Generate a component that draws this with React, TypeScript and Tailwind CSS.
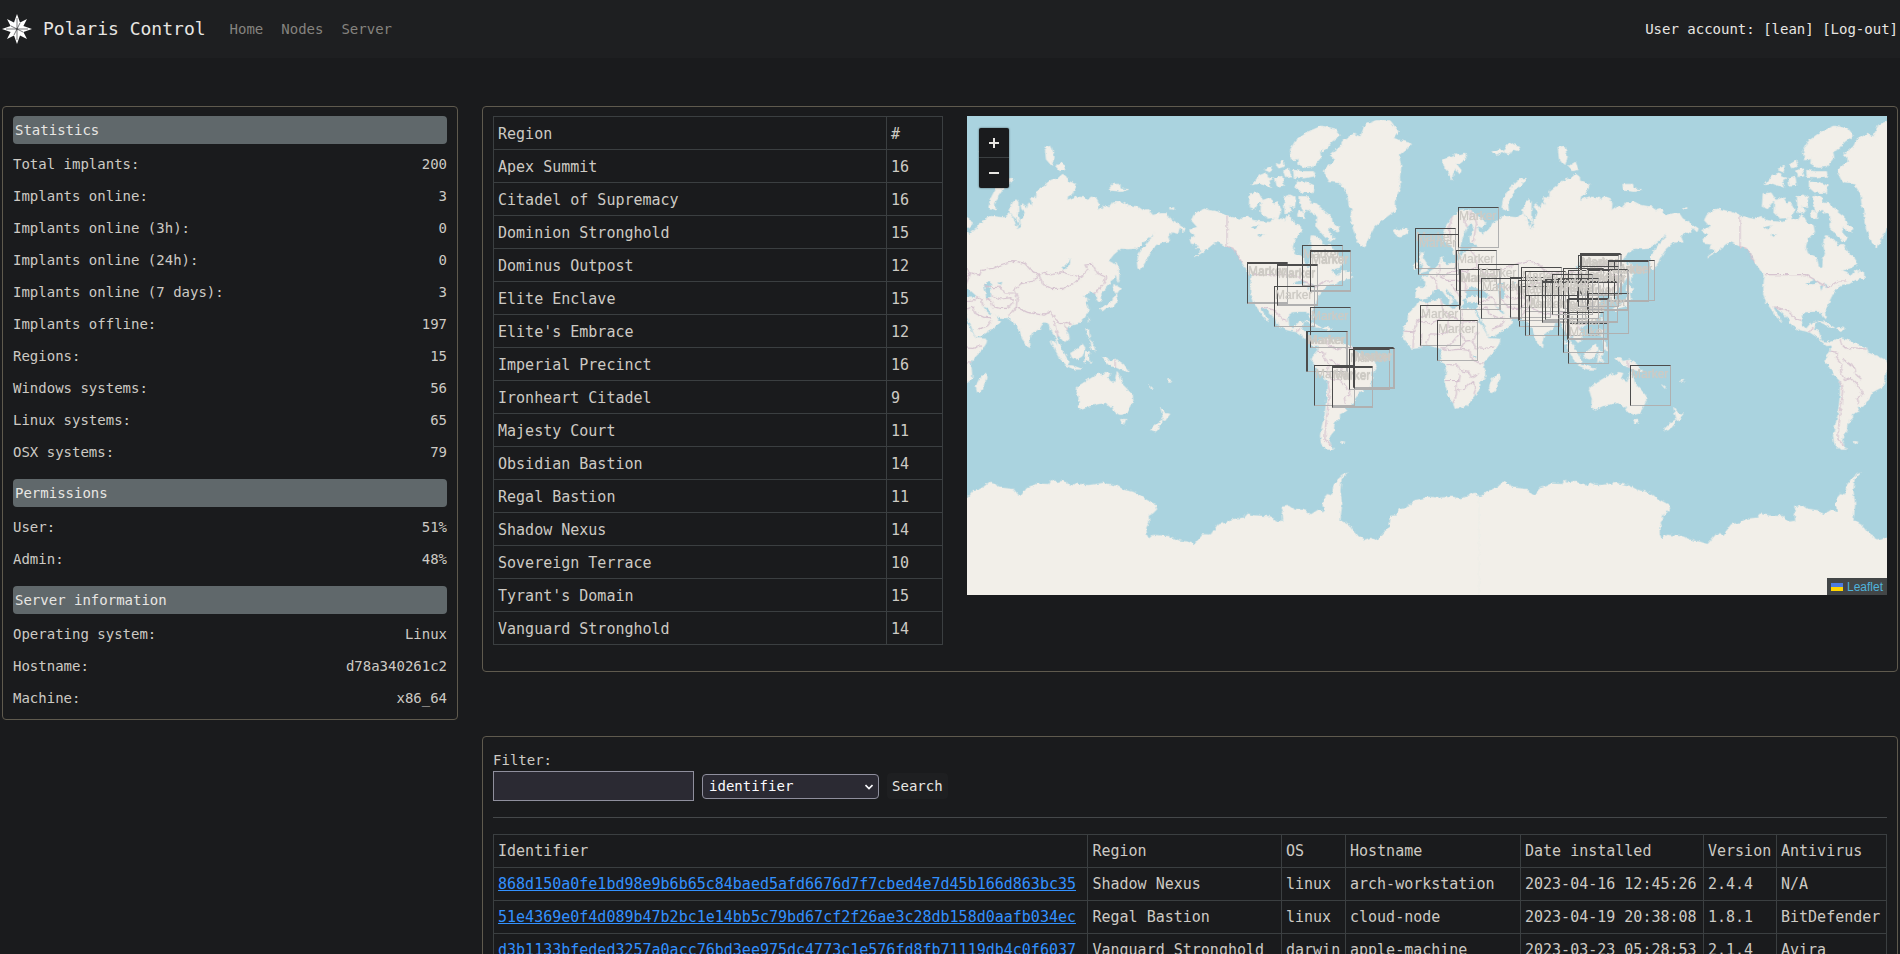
import React from "react";

const stats = [
  {
    title: "Statistics",
    rows: [
      ["Total implants:", "200"],
      ["Implants online:", "3"],
      ["Implants online (3h):", "0"],
      ["Implants online (24h):", "0"],
      ["Implants online (7 days):", "3"],
      ["Implants offline:", "197"],
      ["Regions:", "15"],
      ["Windows systems:", "56"],
      ["Linux systems:", "65"],
      ["OSX systems:", "79"],
    ],
  },
  {
    title: "Permissions",
    rows: [
      ["User:", "51%"],
      ["Admin:", "48%"],
    ],
  },
  {
    title: "Server information",
    rows: [
      ["Operating system:", "Linux"],
      ["Hostname:", "d78a340261c2"],
      ["Machine:", "x86_64"],
    ],
  },
];

const regions = [
  ["Apex Summit", 16],
  ["Citadel of Supremacy", 16],
  ["Dominion Stronghold", 15],
  ["Dominus Outpost", 12],
  ["Elite Enclave", 15],
  ["Elite's Embrace", 12],
  ["Imperial Precinct", 16],
  ["Ironheart Citadel", 9],
  ["Majesty Court", 11],
  ["Obsidian Bastion", 14],
  ["Regal Bastion", 11],
  ["Shadow Nexus", 14],
  ["Sovereign Terrace", 10],
  ["Tyrant's Domain", 15],
  ["Vanguard Stronghold", 14],
];

const nodeColumns = [
  { name: "Identifier", width: "w-[43%]" },
  { name: "Region", width: "w-[14%]" },
  { name: "OS", width: "w-16" },
  { name: "Hostname", width: "w-[175px]" },
  { name: "Date installed", width: "w-[183px]" },
  { name: "Version", width: "w-[73px]" },
  { name: "Antivirus", width: "w-[110px]" },
];

const nodes = [
  ["868d150a0fe1bd98e9b6b65c84baed5afd6676d7f7cbed4e7d45b166d863bc35", "Shadow Nexus", "linux", "arch-workstation", "2023-04-16 12:45:26", "2.4.4", "N/A"],
  ["51e4369e0f4d089b47b2bc1e14bb5c79bd67cf2f26ae3c28db158d0aafb034ec", "Regal Bastion", "linux", "cloud-node", "2023-04-19 20:38:08", "1.8.1", "BitDefender"],
  ["d3b1133bfeded3257a0acc76bd3ee975dc4773c1e576fd8fb71119db4c0f6037", "Vanguard Stronghold", "darwin", "apple-machine", "2023-03-23 05:28:53", "2.1.4", "Avira"],
];

// Marker corners, in map pixels at zoom level 1
const markers = [
  [281, 146], [281, 147], [311, 148], [311, 149], [308, 170], [336, 129], [344, 134], [344, 135],
  [344, 191], [340, 215], [341, 215], [348, 249], [366, 250], [366, 251], [383, 233], [387, 231],
  [388, 232], [449, 112], [452, 118], [492, 91], [490, 134], [493, 153], [494, 153], [512, 148],
  [515, 162], [454, 189], [471, 204], [544, 161], [553, 170], [552, 164], [555, 151], [559, 155],
  [563, 179], [559, 179], [576, 165], [576, 166], [579, 163], [592, 179], [597, 152], [602, 154],
  [602, 207], [597, 196], [612, 139], [614, 137], [615, 138], [622, 154], [611, 166], [611, 165],
  [648, 144], [642, 144], [642, 145], [622, 177], [601, 183], [602, 182], [621, 153], [612, 150],
  [664, 249], [592, 162], [586, 158],
];

const LAND = [
  // Europe and Asia
  "M70 372L78 345L95 320L118 300L140 298L155 303L158 312L185 325L195 340L184 352L168 346L172 360L190 372L195 362L205 358L215 340L235 330L238 322L250 318L268 320L290 322L305 310L316 322L325 345L330 354L333 340L328 328L308 310L306 300L316 276L326 268L332 276L331 320L336 340L326 354L330 357L342 350L338 330L346 320L352 306L342 296L340 286L345 280L352 288L358 296L364 278L376 285L368 262L386 264L388 242L410 225L430 210L450 205L465 192L476 200L478 212L506 222L500 238L492 252L480 258L478 270L505 260L530 262L540 270L550 260L566 265L574 280L572 300L588 288L605 292L615 278L640 275L660 285L690 290L705 300L720 298L735 315L755 310L775 310L785 325L810 340L832 355L828 365L815 352L810 370L790 365L780 380L785 392L765 395L750 402L735 415L720 440L712 455L698 478L690 474L688 455L694 430L708 410L722 392L734 380L738 368L720 386L706 396L700 402L686 414L660 416L640 414L618 432L602 452L614 458L628 470L622 495L610 515L596 530L590 538L580 550L582 568L574 576L566 566L564 550L556 546L544 545L540 552L528 558L542 566L534 576L541 590L541 605L530 622L512 640L498 642L484 648L472 655L482 670L485 685L472 697L462 686L454 676L447 672L448 690L458 704L464 722L472 736L462 728L450 712L446 690L440 672L430 658L424 640L412 635L402 640L398 652L384 662L372 668L368 682L361 705L352 700L342 676L334 652L324 642L312 632L300 622L286 622L270 618L252 608L240 592L226 588L236 602L248 612L256 606L266 618L276 634L262 652L240 664L222 676L206 680L198 664L190 644L180 624L172 606L170 594L174 576L160 574L142 574L136 562L124 566L128 582L120 590L112 576L102 560L88 548L78 534L74 540L84 556L100 568L94 570L92 580L86 582L88 568L76 556L66 542L52 538L40 540L34 552L24 562L6 568L0 562L-14 562L-14 532L12 534L16 514L0 502L20 496L30 482L44 474L56 462L60 444L66 438L64 456L80 462L106 456L120 442L128 428L148 420L152 410L172 412L166 400L150 398L148 380L160 352L150 340L138 352L128 378L120 402L118 422L106 438L98 428L92 404L80 400L70 390Z",
  // Africa
  "M-50 655L-40 635L-34 608L-12 585L-6 572L18 576L60 565L66 580L88 590L98 598L106 588L128 596L160 596L166 612L178 636L192 662L206 684L238 686L236 698L222 720L202 740L188 758L192 778L194 802L176 816L174 840L160 856L150 872L134 888L104 894L98 878L84 854L72 812L78 784L76 764L60 746L64 730L58 713L38 708L18 702L-2 712L-24 714L-42 696L-52 680Z",
  // Americas
  "M870 305L890 296L905 300L930 305L957 316L975 322L1000 327L1020 318L1035 330L1060 334L1085 336L1105 322L1130 330L1142 312L1160 340L1176 345L1180 365L1160 385L1153 410L1160 430L1185 440L1192 466L1204 472L1206 446L1212 430L1206 400L1212 376L1225 378L1240 390L1250 406L1265 402L1280 425L1300 445L1308 458L1290 472L1262 480L1278 486L1288 498L1304 478L1312 490L1328 504L1302 508L1284 520L1264 522L1246 535L1235 550L1225 570L1220 585L1210 600L1213 626L1205 620L1198 603L1175 603L1150 605L1140 620L1142 645L1155 655L1172 635L1186 635L1178 657L1192 662L1200 690L1215 698L1230 692L1240 688L1256 684L1285 690L1300 697L1335 712L1340 727L1375 740L1398 752L1404 768L1392 788L1390 810L1385 828L1352 845L1345 860L1325 888L1308 888L1313 902L1294 910L1294 922L1280 935L1276 950L1278 960L1266 975L1262 990L1268 1004L1276 1016L1256 1016L1240 1000L1236 975L1242 945L1250 915L1254 880L1257 850L1257 812L1235 790L1222 765L1211 753L1213 740L1228 722L1230 704L1216 706L1202 694L1188 680L1165 665L1135 658L1110 645L1102 625L1078 600L1060 588L1058 594L1082 634L1065 618L1050 595L1035 575L1027 550L1028 520L1031 500L1015 475L1000 455L990 430L970 412L950 405L930 395L916 400L902 412L880 428L860 440L884 420L866 415L872 402L850 400L846 386L862 375L842 360L868 350L850 330L858 314Z",
  // Greenland, Iceland
  "M1248 182L1281 150L1266 135L1296 110L1306 90L1336 72L1356 80L1371 45L1401 32L1426 30L1446 32L1470 64L1456 85L1508 100L1490 120L1471 135L1478 170L1474 200L1476 230L1462 265L1461 300L1428 325L1398 350L1380 385L1368 411L1351 400L1336 360L1328 320L1330 300L1322 285L1318 250L1296 218L1264 215L1256 200Z",
  "M1454 360L1468 356L1480 360L1496 354L1497 368L1476 381L1460 374Z",
  // Canadian archipelago
  "M1175 258L1200 260L1206 278L1225 280L1245 300L1270 320L1272 336L1292 350L1288 366L1264 350L1262 366L1278 385L1270 394L1250 380L1225 350L1228 320L1200 298L1188 306L1176 284Z",
  "M1026 250L1050 248L1064 270L1050 280L1040 296L1023 289Z",
  "M1060 272L1086 262L1098 282L1106 274L1120 300L1110 322L1078 324L1058 308Z",
  "M1128 260L1146 254L1162 262L1160 292L1142 288L1152 304L1130 308Z",
  "M1146 120L1162 92L1200 65L1240 48L1280 56L1296 76L1270 95L1255 115L1235 125L1238 142L1215 170L1190 172L1168 160L1170 146L1150 150Z",
  "M1156 180L1180 184L1216 184L1218 198L1190 204L1158 202Z M1164 212L1196 216L1218 226L1216 248L1180 246L1164 232Z",
  "M1032 224L1054 196L1074 188L1080 200L1098 204L1082 212L1090 232L1054 220Z M1102 204L1122 198L1126 226L1106 228Z M1126 182L1142 174L1148 198L1132 200Z M1104 164L1124 152L1130 168L1112 174Z M1068 178L1090 168L1086 186Z M1172 302L1188 306L1186 326L1168 318Z",
  "M1312 480L1326 486L1330 502L1314 504Z M1190 632L1212 636L1240 652L1224 650L1208 640Z M1250 650L1272 654L1262 660L1246 656Z M1298 992L1310 994L1302 1000Z",
  // British isles
  "M-2 430L10 424L6 440L16 455L28 470L20 482L-2 488L8 470L-4 450Z M-18 460L-6 454L-6 474L-20 479Z",
  // Arctic islands
  "M244 292L248 268L265 235L290 212L313 204L316 211L288 234L272 258L262 280L264 300Z",
  "M67 150L84 142L98 140L106 130L118 136L134 132L136 146L118 160L108 162L122 180L118 192L104 174L92 210L84 186L74 176Z",
  "M214 125L236 116L248 124L228 136Z M254 112L268 96L280 104L298 108L294 122L276 118L266 132L250 126Z",
  "M412 112L430 108L440 140L432 166L416 148Z M444 168L464 156L472 178L456 182Z M606 222L636 222L638 236L662 238L640 244L608 240Z M784 296L798 292L798 298Z",
  // East Asian islands
  "M624 455L632 470L634 500L630 516L624 490Z M618 522L638 534L628 548L616 540Z M626 548L630 566L618 586L596 592L584 602L576 596L594 584L612 574Z M534 654L542 658L546 680L540 676Z M546 684L558 706L562 722L550 716Z M541 622L546 626L542 636Z",
  "M430 690L446 702L470 730L484 756L478 764L460 748L444 720Z M472 764L496 766L524 776L500 776Z M488 728L508 716L524 700L532 712L522 738L506 746L494 742Z M534 722L546 724L540 738L550 756L538 748L530 758Z M582 740L598 742L606 752L628 748L648 762L664 784L640 778L628 772L604 764Z",
  "M358 698L368 702L366 712L360 706Z",
  // Oceania and Madagascar
  "M505 835L516 824L535 812L555 800L570 790L582 796L592 785L606 788L600 805L618 816L624 800L628 783L638 800L642 820L660 838L674 855L676 870L665 892L655 908L640 912L622 905L612 884L605 888L595 876L570 880L545 886L524 896L512 890L514 866Z",
  "M638 926L654 926L648 941L642 938Z M758 890L772 908L786 910L770 932L764 914Z M766 926L760 940L742 962L729 957L750 936Z M234 787L236 802L222 842L210 847L206 828L214 808Z M722 822L736 834L730 832Z M778 808L790 806L784 814Z",
].join("");

const LAKES =
  "M138 562L134 546L150 526L162 532L186 538L206 556L190 562L164 556Z M228 522L244 514L252 520L244 530L250 545L250 564L236 564L234 544Z M462 475L484 452L488 446L486 462L470 478Z M270 518L284 514L280 526Z M1152 520L1180 508L1192 518L1176 522Z M1196 520L1206 526L1200 542Z M1210 518L1222 528L1214 534Z M1028 350L1052 346L1040 358Z M1048 375L1070 368L1056 380Z M156 736L168 734L164 744Z";

const BORDERS =
  "M957 316V408L975 414L990 436L1002 458M1032 493H1155L1200 520L1222 530L1250 512L1276 512M1058 589L1078 594L1096 598L1110 612L1124 626L1138 630M1164 664L1176 650M1228 722L1248 726L1246 742L1262 760L1258 782L1270 810L1288 804L1312 826L1326 852L1308 862L1312 880M1257 812L1264 840L1258 900L1252 950L1250 985L1268 1006M1256 688L1262 706L1284 716L1298 712L1336 716M1264 746L1300 770L1304 792L1320 806" +
  "M174 500L192 488L216 494L222 480L258 474L284 462L322 452L352 460L372 482L394 492L412 486L430 494L460 484L492 494L520 500L540 478L532 464L554 462L570 490L594 500L588 520L570 540L558 550M394 492L404 520L430 534L466 534L500 518L520 500M394 492L378 512L340 520L318 540L330 560L326 590L360 606L410 614L426 604L444 626L456 640L480 636L492 642M230 526L258 532L278 530L292 548L318 548M326 590L312 604L304 618M252 556L280 566L310 562L318 572L300 594L276 594L256 588M256 588L250 570L236 564M206 558L222 566L226 588M174 574L196 572L210 560M176 596L196 590L206 610L228 620L250 622M214 656L240 646L252 630M438 634L446 660L452 680M470 642L480 660" +
  "M18 576L22 610L-10 630M60 566L68 600L84 612L126 634M126 596V634H176M126 634L118 668L134 692L156 690L172 664M-50 662L-20 664L-10 630L30 640L64 622M-20 664L-22 712M4 668L0 712M28 670L18 702M28 670L66 672L82 660L84 612M60 712L80 712L100 690L118 668M60 712L84 720L118 716L134 692M156 690L164 712L196 714L222 706M148 716L150 742L168 756L192 758M118 716L146 720M78 762L110 764L118 780L146 786L152 800L176 790M72 810L116 810L120 790M106 812L108 850L98 878M108 840L130 836L156 812M156 812L166 830L160 852M96 318L86 350L90 384M150 300L148 330M128 318L140 350M160 312L168 340L158 396M30 496L46 508L50 538M58 462L56 486L46 500M108 456L106 480L84 488L60 500L80 510L110 510L136 520M106 480L136 484L170 470L190 488L176 520M150 420L166 440L170 470M92 520L104 540L122 560M136 520L134 546M622 750V772";

const ANTARCTICA =
  "M10 288L15 288L22 272L32 266L40 258L50 243L58 246L65 260L76 262L90 265L96 278L102 285L112 262L122 256L130 248L148 250L153 237L160 244L172 240L180 248L190 254L195 245L204 252L215 253L232 248L240 246L262 255L275 268L288 272L300 282L310 295L327 312L329 325L322 338L315 345L316 365L311 380L312 402L315 413L322 402L350 406L365 418L378 422L391 429L405 400L418 401L430 370L445 365L456 354L474 350L480 338L490 343L518 346L525 362L537 360L536 340L538 328L535 318L550 315L556 323L575 328L585 340L598 325L607 332L604 312L606 292L612 280L620 284L622 255L630 235L640 220L648 215L636 235L634 270L637 310L634 358L650 375L662 402L675 416L684 411L695 417L715 378L718 345L727 343L733 325L744 320L757 298L768 294L780 288L800 290L820 288L832 292L840 290L850 282L858 276L864 288V640H10Z";

const StarLogo = () => (
  <svg viewBox="0 0 30 30" className="h-[30px] w-[30px] shrink-0" aria-hidden="true">
    <path
      fill="#fff"
      d="M15 0L18 8.6L25 5L21.4 12L30 15L21.4 18L25 25L18 21.4L15 30L12 21.4L5 25L8.6 18L0 15L8.6 12L5 5L12 8.6Z"
    />
    <path
      d="M15 4V15L18 9M26 15H15L21 18M15 26V15L12 21M4 15H15L9 12"
      fill="none"
      stroke="#1e1f21"
      strokeWidth="0.6"
    />
  </svg>
);

const WorldMap = () => (
  <svg
    viewBox="0 0 921 478"
    preserveAspectRatio="xMidYMid slice"
    className="absolute inset-0 h-full w-full"
    aria-hidden="true"
  >
    <defs>
      <filter id="coast" x="0" y="0" width="100%" height="100%">
        <feTurbulence type="fractalNoise" baseFrequency="0.25" numOctaves="2" seed="4" />
        <feDisplacementMap in="SourceGraphic" scale="4" xChannelSelector="R" yChannelSelector="G" />
      </filter>
      <g id="world">
        <path d={LAND} fill="#f2efe9" stroke="#f2efe9" strokeWidth="2" />
        <path d={LAKES} fill="#aad3df" />
        <path d={BORDERS} fill="none" stroke="#d5c2cf" strokeWidth="3.5" />
      </g>
    </defs>
    <rect width="921" height="478" fill="#aad3df" />
    <g filter="url(#coast)">
      <use href="#world" transform="translate(454 -6) scale(0.3333)" />
      <use href="#world" transform="translate(-58 -6) scale(0.3333)" />
      <path d={ANTARCTICA} fill="#f2efe9" transform="translate(-6 284) scale(0.5995 0.3333)" />
      <path d={ANTARCTICA} fill="#f2efe9" transform="translate(506 284) scale(0.5995 0.3333)" />
    </g>
  </svg>
);

const MapView = () => (
  <div className="relative h-[479px] min-w-0 flex-1 overflow-hidden bg-[#aad3df] font-['Liberation_Sans',sans-serif]">
    <WorldMap />
    {markers.map(([x, y], i) => (
      <div
        key={i}
        className="absolute h-[41px] w-[41px] overflow-hidden border border-t-[#4c4c4c] border-r-[#b0b0b0] border-b-[#b0b0b0] border-l-[#4c4c4c] text-xs leading-4 text-[#cdcac4] [text-shadow:0_0_1px_#cdcac4]"
        style={{ left: `calc(50% + ${x - 461}px)`, top: y }}
      >
        Marker
      </div>
    ))}
    <div className="absolute top-3 left-3 flex w-[30px] flex-col overflow-hidden rounded-xs bg-[#1a1b1d] shadow-[0_0_2px_rgba(0,0,0,0.6)]">
      <button aria-label="Zoom in" className="flex h-[30px] items-center justify-center border-b border-[#3b3f41]">
        <svg viewBox="0 0 10 10" className="h-[10px] w-[10px]">
          <path d="M5 0V10M0 5H10" stroke="#e8e6e3" strokeWidth="2" />
        </svg>
      </button>
      <button aria-label="Zoom out" className="flex h-[30px] items-center justify-center">
        <svg viewBox="0 0 10 10" className="h-[10px] w-[10px]">
          <path d="M0 5H10" stroke="#e8e6e3" strokeWidth="2" />
        </svg>
      </button>
    </div>
    <div className="absolute right-0 bottom-0 flex h-[17px] items-center bg-[#434647] px-1 text-xs">
      <a href="#" className="flex items-center gap-1 text-[#4fb3dc]">
        <svg viewBox="0 0 12 8" className="h-2 w-3" aria-hidden="true">
          <path fill="#4C7BE1" d="M0 0h12v4H0z" />
          <path fill="#FFD500" d="M0 4h12v4H0z" />
        </svg>
        Leaflet
      </a>
    </div>
  </div>
);

const Header = () => (
  <header className="flex h-[58px] items-center justify-between bg-[#1e1f21] px-[2px] text-[#e8e6e3]">
    <div className="flex items-center">
      <StarLogo />
      <a href="#" className="ml-[11px] text-lg">
        Polaris Control
      </a>
      <nav className="ml-6 flex gap-[18px] text-[#85837f]">
        <a href="#">Home</a>
        <a href="#">Nodes</a>
        <a href="#">Server</a>
      </nav>
    </div>
    <div>
      User account: [lean] <a href="#">[Log-out]</a>
    </div>
  </header>
);

const Sidebar = () => (
  <aside className="flex w-[calc(24%+1px)] shrink-0 flex-col gap-[11px] rounded border border-[#5f5a4e] px-[10px] pt-[9px] pb-[5px]">
    {stats.map((group) => (
      <section key={group.title}>
        <h2 className="mb-1 h-7 rounded bg-[#60686b] px-[2px] leading-7 text-[#e8e6e3]">{group.title}</h2>
        {group.rows.map(([label, value]) => (
          <div key={label} className="flex h-8 items-center justify-between">
            <span>{label}</span>
            <span>{value}</span>
          </div>
        ))}
      </section>
    ))}
  </aside>
);

const RegionTable = () => (
  <table className="w-[450px] shrink-0 border-collapse text-left text-[15px] leading-6">
    <thead>
      <tr className="h-[33px]">
        <th className="border border-[#3b3f41] px-1 pt-[2px] font-normal">Region</th>
        <th className="w-14 border border-[#3b3f41] px-1 pt-[2px] font-normal">#</th>
      </tr>
    </thead>
    <tbody>
      {regions.map(([name, count]) => (
        <tr key={name} className="h-[33px]">
          <td className="border border-[#3b3f41] px-1 pt-[2px]">{name}</td>
          <td className="border border-[#3b3f41] px-1 pt-[2px]">{count}</td>
        </tr>
      ))}
    </tbody>
  </table>
);

const NodeTable = () => (
  <table className="w-full table-fixed border-collapse text-left text-[15px] leading-6 whitespace-nowrap">
    <thead>
      <tr className="h-[33px]">
        {nodeColumns.map((col) => (
          <th key={col.name} className={`${col.width} border border-[#3b3f41] px-1 font-normal`}>
            {col.name}
          </th>
        ))}
      </tr>
    </thead>
    <tbody>
      {nodes.map(([id, ...cells]) => (
        <tr key={id} className="h-[33px]">
          <td className="border border-[#3b3f41] px-1">
            <a href="#" className="text-[#3391ff] underline">
              {id}
            </a>
          </td>
          {cells.map((cell) => (
            <td key={cell} className="border border-[#3b3f41] px-1">
              {cell}
            </td>
          ))}
        </tr>
      ))}
    </tbody>
  </table>
);

const Filter = () => (
  <form className="mt-3" onSubmit={(e) => e.preventDefault()}>
    <label htmlFor="filter" className="block leading-[22px]">
      Filter:
    </label>
    <div className="flex items-center gap-2">
      <input id="filter" type="text" className="h-[30px] w-[201px] border border-[#8f8f9d] bg-[#2b2a33] px-2 text-white" />
      <div className="relative">
        <select
          aria-label="Filter field"
          className="h-[25px] w-[177px] appearance-none rounded border border-[#8f8f9d] bg-[#2b2a33] px-[6px] text-[#fbfbfe]"
        >
          <option>identifier</option>
          <option>region</option>
          <option>hostname</option>
        </select>
        <svg viewBox="0 0 8 6" className="pointer-events-none absolute top-[10px] right-[6px] h-[6px] w-2" aria-hidden="true">
          <path d="M0.5 1L4 4.5L7.5 1" fill="none" stroke="#fbfbfe" strokeWidth="1.6" />
        </svg>
      </div>
      <button className="h-[26px] rounded bg-[#1e1f21] px-[5px] text-[#e8e6e3]">Search</button>
    </div>
  </form>
);

const App = () => {
  return (
    <div className="h-screen overflow-hidden bg-[#1a1b1d] font-['DejaVu_Sans_Mono',monospace] text-sm text-[#cdcac4]">
      <Header />
      <main className="mt-12 flex items-start gap-6 px-[2px]">
        <Sidebar />
        <div className="flex min-w-0 flex-1 flex-col gap-16">
          <section className="flex items-start gap-6 rounded border border-[#5f5a4e] px-[10px] pt-[9px] pb-[26px]">
            <RegionTable />
            <MapView />
          </section>
          <section className="rounded border border-[#5f5a4e] px-[10px] pb-4">
            <Filter />
            <hr className="my-4 border-[#45484a]" />
            <NodeTable />
          </section>
        </div>
      </main>
    </div>
  );
};

export default App;
